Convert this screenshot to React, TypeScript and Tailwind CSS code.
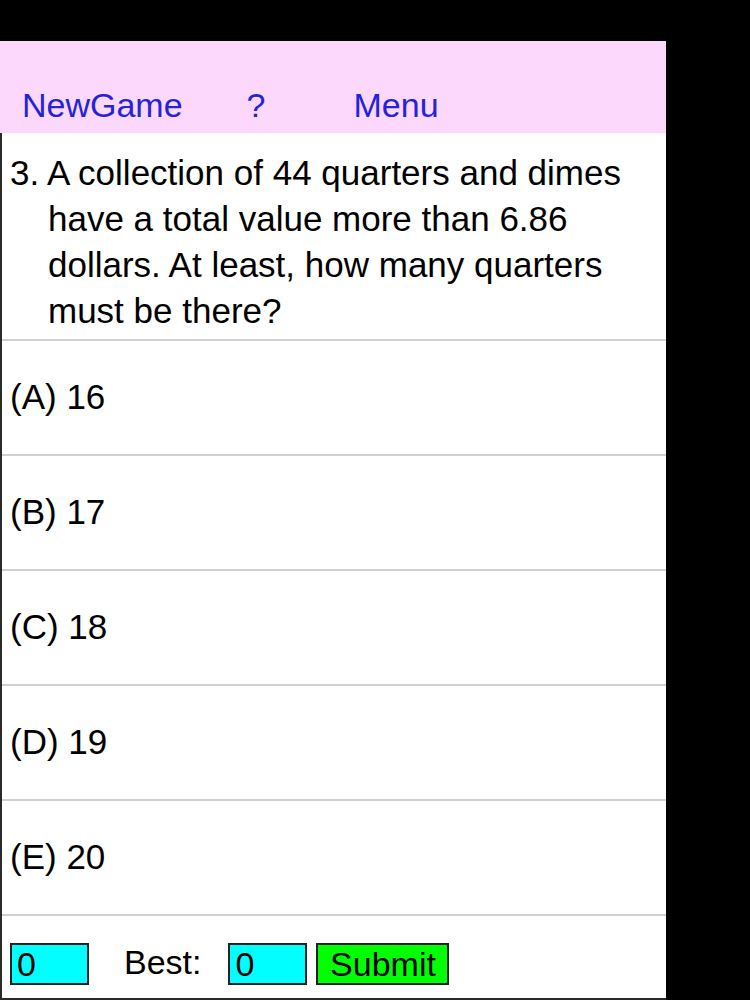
import React from 'react';

const options = ['(A) 16', '(B) 17', '(C) 18', '(D) 19', '(E) 20'];

export default function App() {
  return (
    <div
      className="w-[750px] h-[1000px] bg-black pt-[41px]"
      style={{ fontFamily: '"Liberation Sans", Arial, sans-serif' }}
    >
      <div className="w-[666px] h-[959px] flex flex-col bg-white">
        <div className="h-[92px] bg-[#fdd8fd] flex items-end pb-[11px] text-[34px] leading-none text-[#2323dc]">
          <span className="ml-[22px]">NewGame</span>
          <span className="ml-[64px]">?</span>
          <span className="ml-[88px]">Menu</span>
        </div>

        <div className="flex-1 flex flex-col border-l-2 border-b-2 border-[#2a2a2a]">
          <div className="h-[208px] border-b-2 border-[#d0d0d0] pt-[17px] pl-[46px] -indent-[38px] text-[35px] leading-[46px] text-black whitespace-nowrap">
            3. A collection of 44 quarters and dimes
            <br />
            have a total value more than 6.86
            <br />
            dollars. At least, how many quarters
            <br />
            must be there?
          </div>

          {options.map((opt) => (
            <div
              key={opt}
              className="h-[115px] border-b-2 border-[#d0d0d0] flex items-center pl-[8px] text-[35px] text-black"
            >
              {opt}
            </div>
          ))}

          <div className="flex-1 flex items-end pb-[13px] pl-[8px] text-[34px] leading-none text-black">
            <div className="w-[79px] h-[42px] bg-[#00ffff] border-2 border-[#222] flex items-center pl-[5px]">
              0
            </div>
            <span className="ml-[35px] mb-[6px]">Best:</span>
            <div className="ml-[27px] w-[79px] h-[42px] bg-[#00ffff] border-2 border-[#222] flex items-center pl-[5px]">
              0
            </div>
            <div className="ml-[9px] w-[133px] h-[42px] bg-[#00ff00] border-2 border-[#222] flex items-center justify-center">
              Submit
            </div>
          </div>
        </div>
      </div>
    </div>
  );
}
